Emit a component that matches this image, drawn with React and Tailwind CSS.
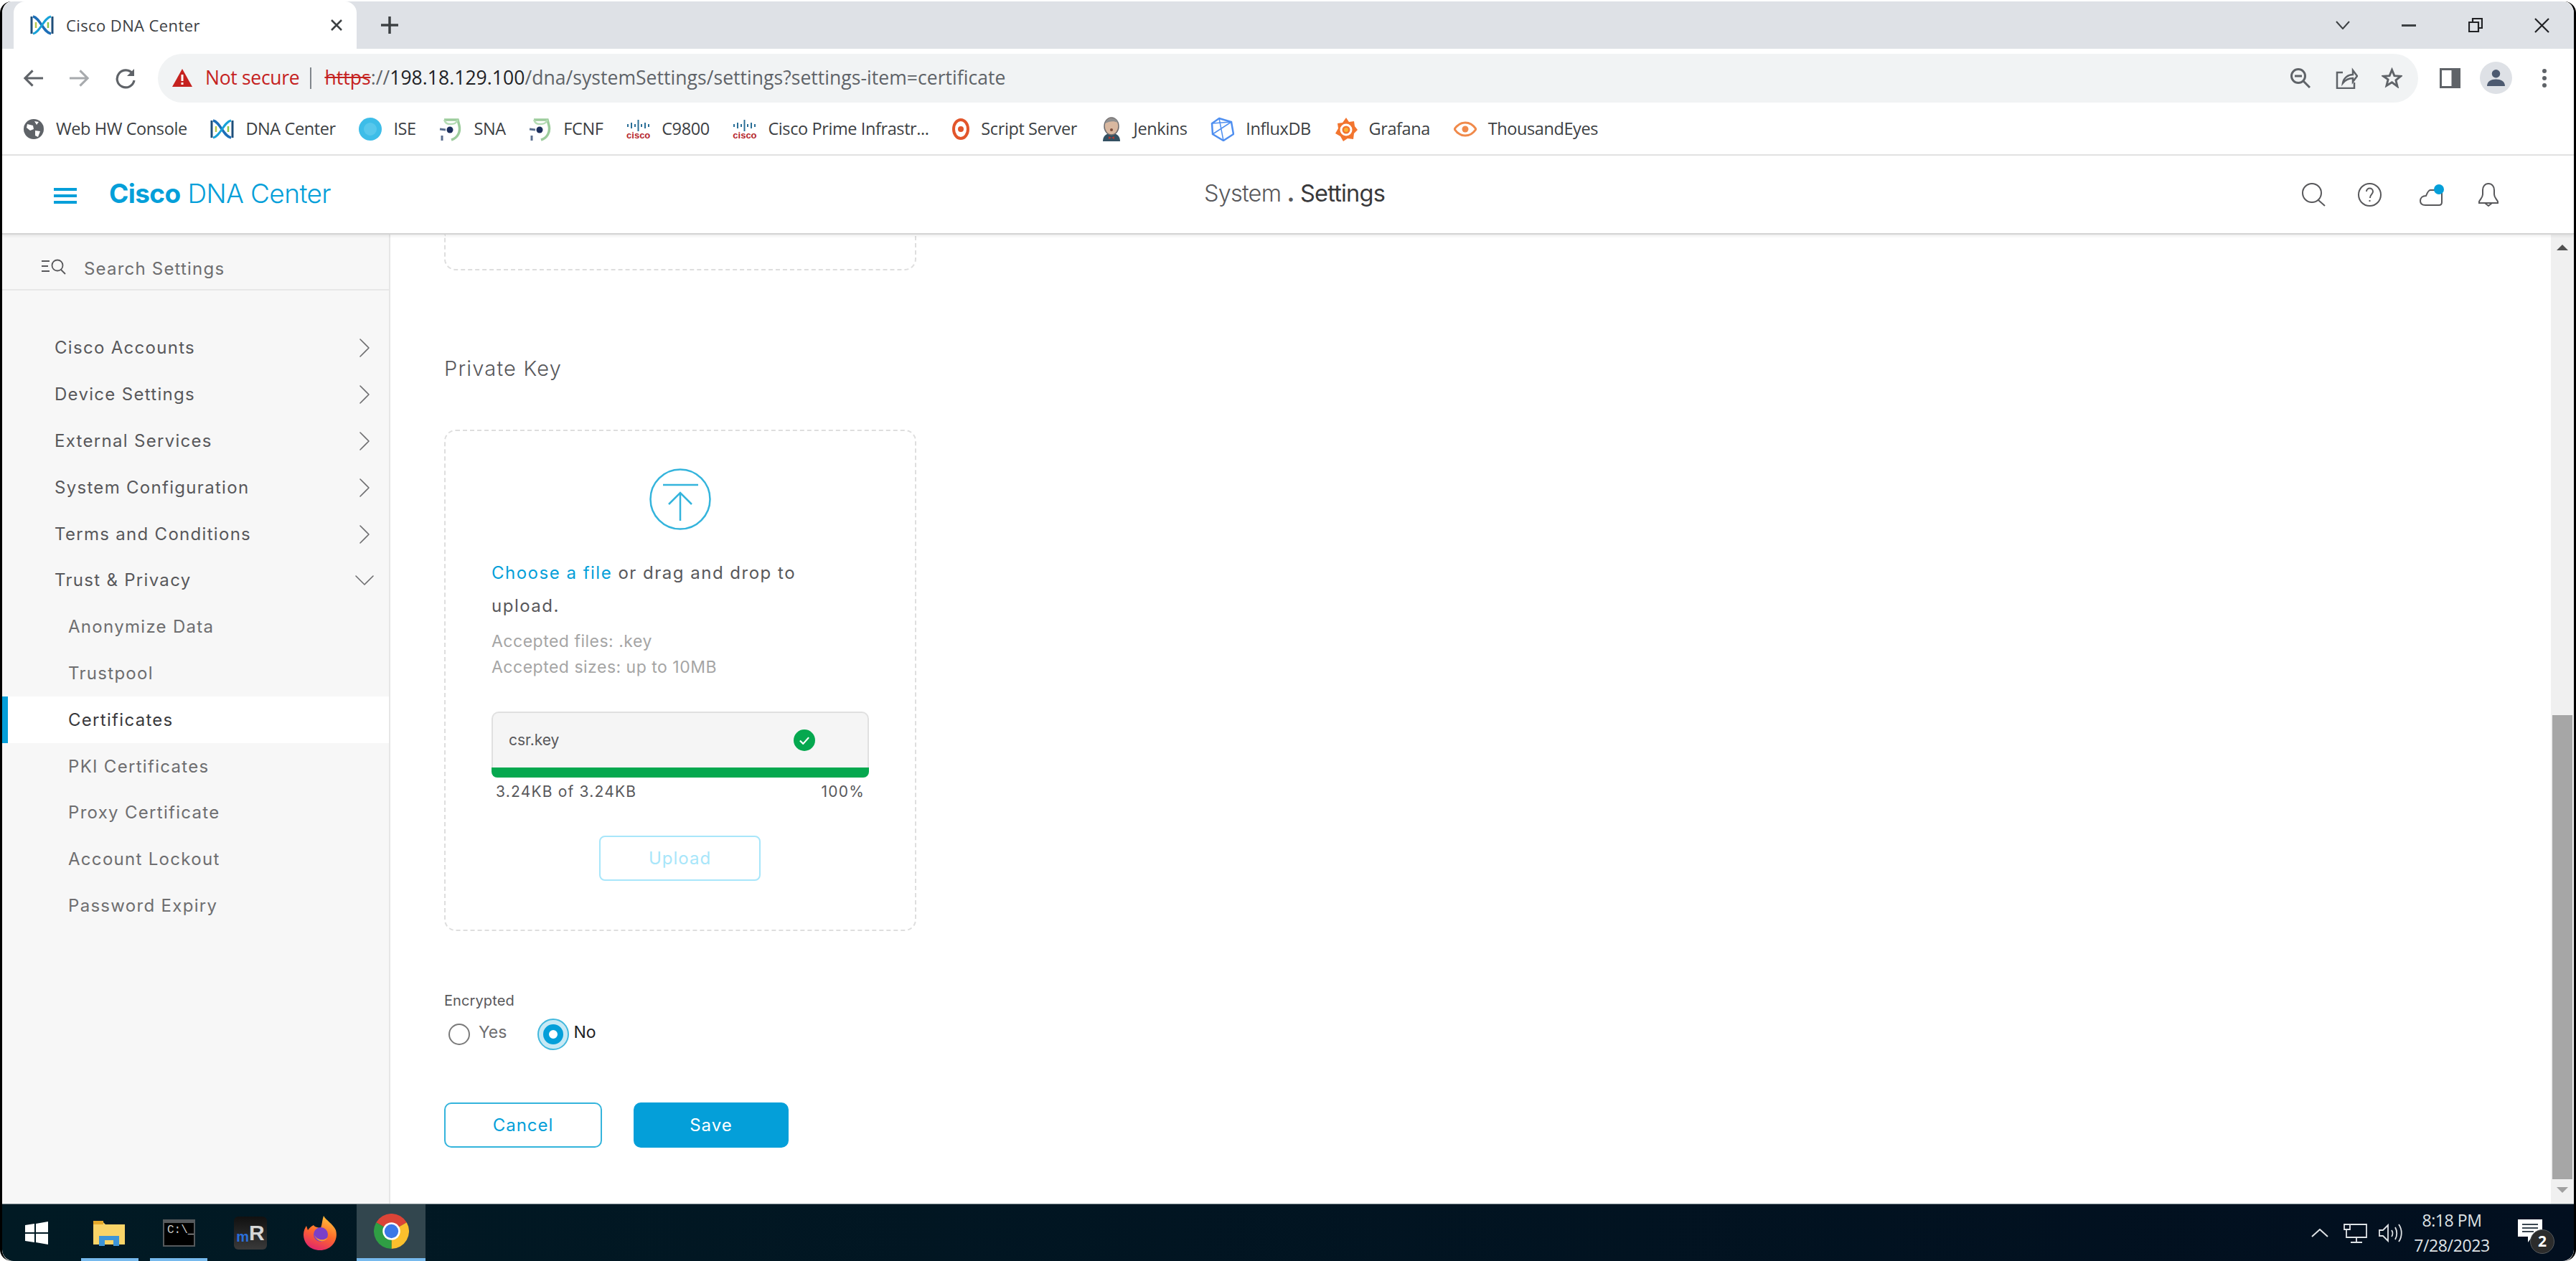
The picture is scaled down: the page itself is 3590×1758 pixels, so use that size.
import React from "react";
import { ChevronRight, ChevronDown } from "lucide-react";

// ----------------- little favicons -----------------
const DnaIcon = () => (
  <svg viewBox="0 0 33 30" className="w-[33px] h-[30px] shrink-0" fill="none">
    <path d="M2 3v24M31 3v24" stroke="#1f4e79" strokeWidth="3" />
    <path d="M4 3c10 2 14 22 25 24" stroke="#1d6fb8" strokeWidth="3.5" />
    <path d="M29 3C19 5 14 25 4 27" stroke="#17a2d8" strokeWidth="3" />
    <path d="M8 11v8" stroke="#b7c84b" strokeWidth="2.5" />
    <path d="M25 11v8" stroke="#8bc34a" strokeWidth="2.5" />
  </svg>
);

const CiscoIcon = () => (
  <div className="w-[33px] shrink-0 flex flex-col items-center leading-none">
    <svg viewBox="0 0 33 17" className="w-[33px] h-[17px]" stroke="#2a6f97" strokeWidth="2">
      <path d="M2 7v4M7 5v8M12 7v4M16.500 1v16M21 7v4M26 5v8M31 7v4" />
    </svg>
    <span className="text-[13px] font-bold text-[#b5262c] font-['Liberation_Sans',sans-serif] -mt-px">cisco</span>
  </div>
);

const EyeCam = () => (
  <svg viewBox="0 0 32 34" className="w-[32px] h-[34px] shrink-0" fill="none">
    <path d="M7 4h19l2 8c2 9-2 17-11 20" stroke="#9ccc9c" strokeWidth="3.500" />
    <path d="M7 4c2 5 4 6 9 6s8-1 10-6" stroke="#b5dcb5" strokeWidth="2.500" />
    <circle cx="15" cy="18" r="4.500" fill="#1c2f5c" />
    <path d="M1 17l8 1M4 26v7" stroke="#5b6f8f" strokeWidth="3" />
  </svg>
);

const bookmarkIcons = {
  globe: (
    <svg viewBox="0 0 30 30" className="w-[30px] h-[30px] shrink-0">
      <circle cx="15" cy="15" r="14" fill="#5f6368" />
      <path d="M6 8l8 2 1 5-5 2-5-4zM17 17l7 1-3 8-4-2zM16 4l6 1-3 4z" fill="#fff" />
    </svg>
  ),
  dna: <DnaIcon />,
  ise: (
    <svg viewBox="0 0 32 32" className="w-[32px] h-[32px] shrink-0">
      <circle cx="16" cy="16" r="16" fill="#3dbde8" />
      <circle cx="16" cy="16" r="9" fill="#58c8ec" />
    </svg>
  ),
  cam: <EyeCam />,
  cisco: <CiscoIcon />,
  script: (
    <svg viewBox="0 0 24 30" className="w-[24px] h-[30px] shrink-0" fill="none">
      <ellipse cx="12" cy="15" rx="10" ry="13" stroke="#e2552b" strokeWidth="4" />
      <circle cx="12" cy="15" r="4" fill="#e2552b" />
    </svg>
  ),
  jenkins: (
    <svg viewBox="0 0 30 34" className="w-[30px] h-[34px] shrink-0">
      <path d="M3 34c0-8 5-11 12-11s12 3 12 11z" fill="#335061" />
      <ellipse cx="15" cy="13" rx="10" ry="12" fill="#d9b8a0" stroke="#6d6b6d" strokeWidth="1.500" />
      <path d="M6 9c1-8 16-10 18-1-6-3-12-2-18 1z" fill="#8f8f8f" />
      <path d="M11 27l4 2 4-2v4l-4-2-4 2z" fill="#b03a30" />
      <circle cx="15" cy="18" r="2" fill="#7a4b3a" />
    </svg>
  ),
  influx: (
    <svg viewBox="0 0 33 34" className="w-[33px] h-[34px] shrink-0" fill="none" stroke="#4f8ff0" strokeWidth="2.500">
      <path d="M12 2l17 5 3 17-14 9L3 24 2 9z" />
      <path d="M12 2l6 31M2 9l27-2M3 24l26-17" strokeWidth="1.500" />
    </svg>
  ),
  grafana: (
    <svg viewBox="0 0 32 34" className="w-[32px] h-[34px] shrink-0" fill="none">
      <path d="M16 1l4 6 7-1 1 7 4 5-5 5-1 8-8-1-6 4-4-7-7-4 4-7-1-7 7-1z" fill="#f2752f" />
      <circle cx="16" cy="18" r="7" stroke="#fff" strokeWidth="3" />
      <circle cx="16" cy="18" r="3" fill="#f9b233" />
    </svg>
  ),
  eye: (
    <svg viewBox="0 0 32 22" className="w-[32px] h-[22px] shrink-0" fill="none">
      <path d="M1 11c8-12 22-12 30 0-8 12-22 12-30 0z" stroke="#f08a4b" strokeWidth="3" />
      <circle cx="16" cy="11" r="4.500" fill="#f08a4b" />
    </svg>
  ),
};

const bookmarks = [
  { icon: "globe", label: "Web HW Console" },
  { icon: "dna", label: "DNA Center" },
  { icon: "ise", label: "ISE" },
  { icon: "cam", label: "SNA" },
  { icon: "cam", label: "FCNF" },
  { icon: "cisco", label: "C9800" },
  { icon: "cisco", label: "Cisco Prime Infrastr..." },
  { icon: "script", label: "Script Server" },
  { icon: "jenkins", label: "Jenkins" },
  { icon: "influx", label: "InfluxDB" },
  { icon: "grafana", label: "Grafana" },
  { icon: "eye", label: "ThousandEyes" },
];

const menu = ["Cisco Accounts", "Device Settings", "External Services", "System Configuration", "Terms and Conditions"];
const subMenu = ["Anonymize Data", "Trustpool", "Certificates", "PKI Certificates", "Proxy Certificate", "Account Lockout", "Password Expiry"];

// ----------------- browser chrome -----------------
function TabStrip() {
  return (
    <div className="h-[66px] bg-[#dee1e6] flex items-stretch rounded-t-[16px] shrink-0">
      <div className="ml-[16px] w-[478px] bg-white rounded-t-[16px] flex items-center pl-[23px] pr-[20px]">
        <DnaIcon />
        <span className="ml-[17px] text-[22px] text-[#3c4043] font-['Open_Sans',sans-serif] whitespace-nowrap tracking-[0.4px]">Cisco DNA Center</span>
        <svg viewBox="0 0 16 16" className="w-[16px] h-[16px] ml-auto" stroke="#3c4043" strokeWidth="2.500">
          <path d="M1 1l14 14M15 1L1 15" />
        </svg>
      </div>
      <div className="ml-[33px] flex items-center">
        <svg viewBox="0 0 26 26" className="w-[26px] h-[26px]" stroke="#3c4043" strokeWidth="3.500">
          <path d="M13 1v24M1 13h24" />
        </svg>
      </div>
      <div className="ml-auto flex items-center pr-[34px]">
        <svg viewBox="0 0 20 12" className="w-[20px] h-[12px]" fill="none" stroke="#3c4043" strokeWidth="2">
          <path d="M1 1l9 10 9-10" />
        </svg>
        <div className="ml-[72px] w-[20px] h-[3px] bg-[#3c4043]" />
        <svg viewBox="0 0 20 20" className="ml-[73px] w-[20px] h-[20px]" fill="none" stroke="#202124" strokeWidth="2.200">
          <path d="M1 6h13v13H1zM6 6V1h13v13h-5" />
        </svg>
        <svg viewBox="0 0 21 21" className="ml-[72px] w-[21px] h-[21px]" stroke="#202124" strokeWidth="2.200">
          <path d="M1 1l19 19M20 1L1 20" />
        </svg>
      </div>
    </div>
  );
}

function Toolbar() {
  return (
    <div className="h-[77px] flex items-center pl-[29px] pr-[38px] pt-[4px] shrink-0">
      <svg viewBox="0 0 30 26" className="w-[29px] h-[26px]" fill="none" stroke="#5f6368" strokeWidth="3.200">
        <path d="M29 13H3M14 2L3 13l11 11" />
      </svg>
      <svg viewBox="0 0 30 26" className="ml-[35px] w-[29px] h-[26px]" fill="none" stroke="#a7aaad" strokeWidth="3.200">
        <path d="M1 13h26M16 2l11 11-11 11" />
      </svg>
      <svg viewBox="0 0 30 30" className="ml-[35px] w-[30px] h-[30px]" fill="none" stroke="#5f6368" strokeWidth="3.200">
        <path d="M25 9a12 12 0 1 0 2 9" />
        <path d="M27 2v10H17z" fill="#5f6368" stroke="none" />
      </svg>
      <div className="ml-[30px] flex-1 h-[68px] bg-[#f1f3f4] rounded-full flex items-center pl-[20px] pr-[22px]">
        <svg viewBox="0 0 28 25" className="w-[28px] h-[25px] shrink-0">
          <path d="M14 0l14 25H0z" fill="#c5221f" />
          <path d="M12.500 8h3v9h-3zM12.500 19h3v3h-3z" fill="#fff" />
        </svg>
        <span className="ml-[18px] text-[26.500px] text-[#c5221f] font-['Open_Sans',sans-serif] whitespace-nowrap tracking-[-0.3px]">Not secure</span>
        <div className="ml-[15px] w-[2px] h-[30px] bg-[#80868b]" />
        <span className="ml-[18px] text-[26.500px] text-[#5f6368] font-['Open_Sans',sans-serif] whitespace-nowrap tracking-[0.05px]">
          <span className="text-[#c5221f] line-through">https</span>
          <span>://</span>
          <span className="text-[#202124]">198.18.129.100</span>
          <span>/dna/systemSettings/settings?settings-item=certificate</span>
        </span>
        <svg viewBox="0 0 28 28" className="ml-auto w-[28px] h-[28px]" fill="none" stroke="#5f6368" strokeWidth="3">
          <circle cx="11" cy="11" r="9.500" />
          <path d="M6 11h10M18 18l9 9" />
        </svg>
        <svg viewBox="0 0 31 30" className="ml-[35px] w-[31px] h-[30px]" fill="none" stroke="#5f6368" strokeWidth="2.500">
          <path d="M10 7H2v22h24v-8M10 22c1-7 7-12 14-12V4l6 8-6 8v-5c-5 0-10 2-14 7z" />
        </svg>
        <svg viewBox="0 0 30 29" className="ml-[33px] w-[29px] h-[29px]" fill="none" stroke="#5f6368" strokeWidth="3">
          <path d="M15 3l3.500 8.500 9 .7-6.900 5.800 2.200 8.800L15 21l-7.800 4.800L9.400 17 2.500 12.200l9-.7z" />
        </svg>
      </div>
      <svg viewBox="0 0 29 28" className="ml-[30px] w-[29px] h-[28px] shrink-0" fill="#fff" stroke="#5f6368" strokeWidth="3">
        <rect x="1.500" y="1.500" width="26" height="25" />
        <rect x="18" y="1.500" width="9.500" height="25" fill="#5f6368" />
      </svg>
      <div className="ml-[27px] w-[45px] h-[45px] rounded-full bg-[#dee1e6] flex items-center justify-center shrink-0">
        <svg viewBox="0 0 26 26" className="w-[25px] h-[25px]" fill="#4d5a70">
          <circle cx="13" cy="7" r="6" />
          <path d="M0 25c0-7 6-10 13-10s13 3 13 10z" />
        </svg>
      </div>
      <div className="ml-[42px] flex flex-col gap-[4px] shrink-0">
        <div className="w-[6px] h-[6px] rounded-full bg-[#5f6368]" />
        <div className="w-[6px] h-[6px] rounded-full bg-[#5f6368]" />
        <div className="w-[6px] h-[6px] rounded-full bg-[#5f6368]" />
      </div>
    </div>
  );
}

function BookmarksBar() {
  return (
    <div className="h-[72px] flex items-center pl-[29px] gap-[32.700px] border-b-[2px] border-[#e2e2e2] shrink-0">
      {bookmarks.map((b, i) => (
        <div key={i} className="flex items-center gap-[16px]">
          {bookmarkIcons[b.icon]}
          <span className="text-[23.500px] text-[#3c4043] font-['Open_Sans',sans-serif] whitespace-nowrap tracking-[-0.4px]">{b.label}</span>
        </div>
      ))}
    </div>
  );
}

// ----------------- app header -----------------
function AppHeader() {
  return (
    <div className="relative z-10 h-[110px] flex items-center bg-white border-b-[2px] border-[#d4d4d4] shadow-[0_2px_4px_rgba(0,0,0,0.08)] pl-[72px] pr-[104px] shrink-0">
      <div className="w-[32px] flex flex-col gap-[5px] shrink-0 mt-[4px]">
        <div className="h-[4px] bg-[#049fd9]" />
        <div className="h-[4px] bg-[#049fd9]" />
        <div className="h-[4px] bg-[#049fd9]" />
      </div>
      <span className="ml-[45px] w-[320px] -mt-[3px] text-[37px] text-[#049fd9] font-['Inter',sans-serif] font-light whitespace-nowrap tracking-[-0.6px]">
        <span className="font-bold">Cisco</span> DNA Center
      </span>
      <span className="ml-[1206px] -mt-[2px] text-[32.500px] text-[#58585b] font-['Inter',sans-serif] font-light whitespace-nowrap tracking-[-0.8px]">
        System <span className="font-bold">.</span> <span className="text-[#39393b] font-normal">Settings</span>
      </span>
      <svg viewBox="0 0 33 33" className="ml-auto w-[33px] h-[33px]" fill="none" stroke="#58585b" strokeWidth="2">
        <circle cx="14" cy="14" r="13" />
        <path d="M23 24l9 8" />
      </svg>
      <svg viewBox="0 0 33 33" className="ml-[45px] w-[33px] h-[33px]" fill="none" stroke="#58585b" strokeWidth="2">
        <circle cx="16.500" cy="16.500" r="15.500" />
        <path d="M12 12c0-6 9-6 9 0 0 4-4 4-4 9M16.500 24v2" />
      </svg>
      <div className="relative ml-[52px] w-[34px] h-[33px]">
        <svg viewBox="0 0 34 33" className="w-[34px] h-[33px]" fill="none" stroke="#58585b" strokeWidth="2">
          <path d="M24 10H16c-2 0-4 3-6 8-5 0-8 3-8 7s3 6 7 6h19c3 0 4-2 4-4V14" />
        </svg>
        <div className="absolute right-[-1px] top-[2px] w-[14px] h-[14px] rounded-full bg-[#049fd9]" />
      </div>
      <svg viewBox="0 0 30 33" className="ml-[48px] w-[30px] h-[33px]" fill="none" stroke="#58585b" strokeWidth="2">
        <path d="M15 1c-5 0-8 4-8 9v6c0 4-3 6-5 10v2h26v-2c-2-4-5-6-5-10v-6c0-5-3-9-8-9zM10 28l5 4 5-4" />
      </svg>
    </div>
  );
}

function Sidebar() {
  return (
    <div className="w-[541px] bg-[#f7f7f7] border-r-[2px] border-[#e6e6e6] flex flex-col shrink-0 font-['Inter',sans-serif]">
      <div className="h-[78px] flex items-center pl-[54px] pt-[20px] border-b-[2px] border-[#e8e8e8] shrink-0">
        <svg viewBox="0 0 36 22" className="w-[36px] h-[22px] -mt-[7px]" fill="none" stroke="#58585b" strokeWidth="1.800">
          <path d="M1 3h11M1 10h9M1 17h11" />
          <circle cx="23" cy="9" r="7.500" />
          <path d="M28 15l6 6" />
        </svg>
        <span className="ml-[24px] text-[24px] text-[#6e6e70] whitespace-nowrap tracking-[1.2px]">Search Settings</span>
      </div>
      <div className="pt-[48px]">
        {menu.map((m) => (
          <div key={m} className="h-[64.800px] flex items-center pl-[73px] pr-[10px] text-[24px] text-[#58585b] tracking-[1.3px] whitespace-nowrap">
            <span>{m}</span>
            <ChevronRight className="ml-auto w-[48px] h-[48px]" strokeWidth={0.8} color="#6e6e70" />
          </div>
        ))}
        <div className="h-[64.800px] flex items-center pl-[73px] pr-[10px] text-[24px] text-[#58585b] tracking-[1.3px] whitespace-nowrap">
          <span>Trust &amp; Privacy</span>
          <ChevronDown className="ml-auto w-[48px] h-[48px]" strokeWidth={0.8} color="#6e6e70" />
        </div>
        {subMenu.map((s) =>
          s === "Certificates" ? (
            <div key={s} className="h-[64.800px] flex items-center bg-white border-l-[8px] border-[#049fd9] pl-[84px] text-[24px] text-[#39393b] tracking-[1.3px] whitespace-nowrap">
              {s}
            </div>
          ) : (
            <div key={s} className="h-[64.800px] flex items-center pl-[92px] text-[24px] text-[#6e6e70] tracking-[1.3px] whitespace-nowrap">
              {s}
            </div>
          )
        )}
      </div>
    </div>
  );
}

function Scrollbar() {
  return (
    <div className="w-[32px] bg-[#f0f0f0] flex flex-col items-center shrink-0">
      <div className="mt-[14px] w-0 h-0 border-x-[8px] border-x-transparent border-b-[8px] border-b-[#505050]" />
      <div className="mt-[648px] w-[28px] flex-1 bg-[#a6a6a6]" />
      <div className="mt-[11px] mb-[15px] w-0 h-0 border-x-[8px] border-x-transparent border-t-[8px] border-t-[#a0a0a0]" />
    </div>
  );
}

function UploadCard() {
  return (
    <div className="mt-[67px] w-[658px] h-[699px] border-2 border-dashed border-[#dedede] rounded-[16px] pt-[52px] px-[64px] font-['Inter',sans-serif]">
      <svg viewBox="0 0 86 86" className="w-[86px] h-[86px] mx-auto" fill="none" stroke="#34b4dc" strokeWidth="2.500">
        <circle cx="43" cy="43" r="41.500" />
        <path d="M19 23h49M43 73V34M27 50l16-16 16 16" />
      </svg>
      <div className="mt-[37px] text-[24px] leading-[46px] text-[#58585b] tracking-[1.5px] whitespace-nowrap">
        <span className="text-[#049fd9]">Choose a file</span> or drag and drop to
        <br />
        upload.
      </div>
      <div className="mt-[8px] text-[23px] leading-[36px] text-[#a5a5a5] whitespace-nowrap tracking-[0.5px]">
        <div>Accepted files: .key</div>
        <div>Accepted sizes: up to 10MB</div>
      </div>
      <div className="mt-[44px] w-[526px] h-[78px] bg-[#f5f5f5] border-2 border-b-0 border-[#e0e0e0] rounded-t-[10px] flex items-center pl-[22px]">
        <span className="text-[21px] text-[#58585b]">csr.key</span>
        <div className="ml-auto mr-[73px] w-[30px] h-[30px] rounded-full bg-[#05a84f] flex items-center justify-center">
          <svg viewBox="0 0 16 12" className="w-[14px] h-[11px]" fill="none" stroke="#fff" strokeWidth="2.500">
            <path d="M1 6l5 5 9-10" />
          </svg>
        </div>
      </div>
      <div className="w-[526px] h-[14px] bg-[#05a84f] rounded-b-[8px]" />
      <div className="w-[526px] pl-[6px] pr-[6px] mt-[5px] flex justify-between text-[21px] leading-[30px] text-[#58585b] tracking-[1.2px]">
        <span>3.24KB of 3.24KB</span>
        <span>100%</span>
      </div>
      <div className="mt-[46px] ml-[150px] w-[225px] h-[63px] border-2 border-[#a8e6fa] rounded-[8px] flex items-center justify-center text-[24px] text-[#a8e6fa] tracking-[1px]">
        Upload
      </div>
    </div>
  );
}

function MainPanel() {
  return (
    <div className="flex-1 bg-white pl-[75px] font-['Inter',sans-serif]">
      <div className="w-[658px] h-[50px] border-2 border-t-0 border-dashed border-[#dedede] rounded-b-[16px]" />
      <div className="mt-[119px] text-[29px] leading-[36px] font-light text-[#58585b] tracking-[1.2px]">Private Key</div>
      <UploadCard />
      <div className="mt-[85px] text-[20px] leading-[24px] text-[#58585b] tracking-[0.1px]">Encrypted</div>
      <div className="mt-[13px] flex items-center h-[44px]">
        <div className="ml-[6px] w-[30px] h-[30px] rounded-full border-2 border-[#7a7a7a] bg-white" />
        <span className="ml-[12px] -mt-[6px] text-[23px] text-[#6e6e70]">Yes</span>
        <div className="ml-[43px] w-[44px] h-[44px] rounded-full bg-[#c7e9f5] border-2 border-[#42b8dd] flex items-center justify-center">
          <div className="w-[28px] h-[28px] rounded-full border-[8px] border-[#049fd9] bg-white" />
        </div>
        <span className="ml-[6px] -mt-[6px] text-[23px] text-[#202124]">No</span>
      </div>
      <div className="mt-[73px] flex gap-[44px] text-[24px] tracking-[1px]">
        <div className="w-[220px] h-[63px] border-2 border-[#34b4dc] rounded-[10px] flex items-center justify-center text-[#049fd9]">Cancel</div>
        <div className="w-[216px] h-[63px] bg-[#049fd9] rounded-[10px] flex items-center justify-center text-white">Save</div>
      </div>
    </div>
  );
}

// ----------------- windows taskbar -----------------
function Taskbar() {
  return (
    <div className="h-[80px] bg-gradient-to-r from-[#011a24] to-[#020f1f] border-t-[1px] border-[#7d8b91] rounded-b-[16px] flex items-stretch shrink-0">
      <div className="ml-[32px] flex items-center">
        <svg viewBox="0 0 32 32" className="w-[32px] h-[32px]" fill="#fff">
          <path d="M0 5l13-2v12H0zM15 3l17-3v15H15zM0 17h13v12L0 27zM15 17h17v15l-17-3z" />
        </svg>
      </div>
      <div className="ml-[63px] flex items-center w-[44px] relative">
        <svg viewBox="0 0 44 36" className="w-[44px] h-[36px]">
          <path d="M0 3h14l3 3h27v28H0z" fill="#f9d468" />
          <path d="M0 1h14v5H0z" fill="#e5a92a" />
          <path d="M8 22h28v14h-8v-8H16v8H8z" fill="#3d95d8" />
        </svg>
        <div className="absolute left-[-17px] bottom-0 w-[80px] h-[4px] bg-[#76b9ed]" />
      </div>
      <div className="ml-[53px] flex items-center relative">
        <div className="w-[45px] h-[38px] bg-black border-2 border-[#55595c] border-t-[5px] pl-[4px] text-[16px] leading-[20px] text-[#ccc] font-['Liberation_Mono',monospace] overflow-hidden">C:\_</div>
        <div className="absolute left-[-18px] bottom-0 w-[80px] h-[4px] bg-[#76b9ed]" />
      </div>
      <div className="ml-[54px] flex items-center">
        <div className="w-[46px] h-[46px] rounded-[6px] bg-gradient-to-b from-[#111] to-[#3a3a3a] flex items-end justify-center pb-[8px] font-['Liberation_Sans',sans-serif] font-bold leading-none">
          <span className="text-[20px] text-[#2a6fdc]">m</span>
          <span className="text-[30px] text-[#d6d6d6]">R</span>
        </div>
      </div>
      <div className="ml-[51px] flex items-center">
        <svg viewBox="0 0 47 48" className="w-[47px] h-[48px]">
          <defs>
            <linearGradient id="fx" x1="0.700" y1="0" x2="0.300" y2="1">
              <stop offset="0" stopColor="#ffc23a" />
              <stop offset="0.500" stopColor="#ff6a2b" />
              <stop offset="1" stopColor="#e0246e" />
            </linearGradient>
          </defs>
          <path d="M28 0c3 6 13 11 17 20 4 14-6 28-22 28C9 48 0 38 0 26c0-5 2-9 4-12l2 6c2-3 4-5 8-7 2 3 5 3 10 4 2-6 2-11 4-17z" fill="url(#fx)" />
          <circle cx="24" cy="26" r="10" fill="#7b3fc8" />
          <path d="M14 24c2 8 12 13 20 6-4 8-16 8-20-6z" fill="#ff9a2e" />
        </svg>
      </div>
      <div className="ml-[27px] w-[96px] bg-[#32464e] border-b-[4px] border-[#76b9ed] flex items-center justify-center">
        <svg viewBox="0 0 48 48" className="w-[49px] h-[49px]">
          <path d="M24 24L3.200 12A24 24 0 0 1 44.800 12z" fill="#db4437" />
          <path d="M24 24L44.800 12A24 24 0 0 1 24 48z" fill="#fbc02d" />
          <path d="M24 24L24 48A24 24 0 0 1 3.200 12z" fill="#2f9e44" />
          <circle cx="24" cy="24" r="12" fill="#fff" />
          <circle cx="24" cy="24" r="9.500" fill="#3b78e7" />
        </svg>
      </div>
      <div className="ml-auto flex items-center pr-[44px] text-[#dfe3e6] font-['Open_Sans',sans-serif]">
        <svg viewBox="0 0 24 12" className="w-[24px] h-[12px]" fill="none" stroke="#dfe3e6" strokeWidth="2">
          <path d="M1 11L12 1l11 10" />
        </svg>
        <svg viewBox="0 0 33 28" className="ml-[21px] w-[33px] h-[28px]" fill="none" stroke="#dfe3e6" strokeWidth="1.800">
          <path d="M10 2h22v18H4V9M18 20v6M10 27h16M1 2h8v7H1z" />
        </svg>
        <svg viewBox="0 0 33 28" className="ml-[16px] w-[33px] h-[28px]" fill="none" stroke="#dfe3e6" strokeWidth="1.800">
          <path d="M1 10h5l7-7v22l-7-7H1zM18 10c2 3 2 6 0 9M23 6c3 5 3 12 0 17M28 2c5 7 5 17 0 24" />
        </svg>
        <div className="ml-[15px] w-[108px] text-center text-[23px] leading-[35px] whitespace-nowrap tracking-[-0.4px]">
          <div>8:18 PM</div>
          <div>7/28/2023</div>
        </div>
        <div className="relative ml-[38px] w-[34px] h-[30px] -mt-[8px]">
          <svg viewBox="0 0 34 32" className="w-[34px] h-[32px]" fill="#fff">
            <path d="M0 0h34v24H20l-6 8v-8H0z" />
            <path d="M6 7h22M6 12h22M6 17h16" stroke="#3a4650" strokeWidth="2" />
          </svg>
          <div className="absolute right-[-17px] top-[14px] w-[34px] h-[34px] rounded-full bg-[#2c2c2c] border border-[#55595c] flex items-center justify-center text-[21px] font-bold text-white">2</div>
        </div>
      </div>
    </div>
  );
}

export default function App() {
  return (
    <div className="w-[3590px] h-[1758px] bg-white pt-[2px] overflow-hidden">
      <div className="h-full flex flex-col border-x-[3px] border-black rounded-[16px] overflow-hidden">
        <TabStrip />
        <Toolbar />
        <BookmarksBar />
        <AppHeader />
        <div className="flex-1 min-h-0 flex overflow-hidden">
          <Sidebar />
          <MainPanel />
          <Scrollbar />
        </div>
        <Taskbar />
      </div>
    </div>
  );
}
